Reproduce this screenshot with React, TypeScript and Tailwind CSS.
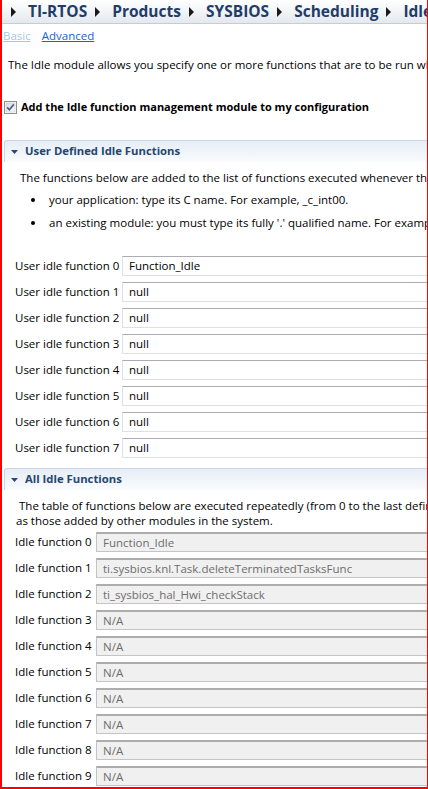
import React from "react";

const crumbs = ["TI-RTOS", "Products", "SYSBIOS", "Scheduling", "Idle"];

const userFns = [
    "Function_Idle", "null", "null", "null", "null", "null", "null", "null",
];

const allFns = [
    "Function_Idle",
    "ti.sysbios.knl.Task.deleteTerminatedTasksFunc",
    "ti_sysbios_hal_Hwi_checkStack",
    "N/A", "N/A", "N/A", "N/A", "N/A", "N/A", "N/A",
];

const font = { fontFamily: '"Open Sans", "Noto Sans", sans-serif' };

function Arrow() {
    return (
        <svg width="5" height="10" viewBox="0 0 5 10" className="flex-shrink-0">
            <polygon points="0,0 5,5 0,10" fill="#1a1a1a" />
        </svg>
    );
}

function CheckBox() {
    return (
        <svg width="13" height="13" viewBox="0 0 13 13" className="flex-shrink-0">
            <defs>
                <linearGradient id="cb" x1="0" y1="0" x2="1" y2="1">
                    <stop offset="0" stopColor="#dcdcdc" />
                    <stop offset="1" stopColor="#fafafa" />
                </linearGradient>
            </defs>
            <rect x="0.5" y="0.5" width="12" height="12" fill="#fff" stroke="#8e8f8f" />
            <rect x="2" y="2" width="9" height="9" fill="url(#cb)" stroke="#c6c6c6" strokeWidth="0.6" />
            <path d="M3.2 6.4 L5.4 8.8 L9.8 3.4" fill="none" stroke="#4a5f8f" strokeWidth="1.7" />
        </svg>
    );
}

function SectionHeader({ title }: { title: string }) {
    return (
        <div className="ml-[2px] h-[22px] flex items-center pl-[6px] border-t border-l border-[#c9d5e3] rounded-tl-[3px] bg-gradient-to-b from-[#e6edf5] to-[#fafcfe]">
            <svg width="7" height="4" viewBox="0 0 7 4" className="flex-shrink-0">
                <polygon points="0,0 7,0 3.5,4" fill="#2a4a75" />
            </svg>
            <span className="ml-[7px] text-[11.3px] font-bold text-[#25466f]">{title}</span>
        </div>
    );
}

export default function App() {
    return (
        <div
            className="w-[428px] h-[789px] overflow-hidden bg-white border-l-2 border-r border-b-2 border-[#ff0000] text-[11.5px] text-black whitespace-nowrap"
            style={font}
        >
            {/* Breadcrumb */}
            <div className="h-[24px] flex items-center pl-[9px] pt-[1px] border-b border-[#c3cdd8] bg-gradient-to-b from-white to-[#e4e9ee]">
                {crumbs.map((c) => (
                    <div key={c} className="flex items-center flex-shrink-0">
                        <Arrow />
                        <span className="ml-[12px] mr-[8px] text-[15.5px] font-bold text-[#1f3d68] leading-none">{c}</span>
                    </div>
                ))}
            </div>

            {/* Tabs */}
            <div className="h-[24px] flex items-center pl-[1px] gap-[11px]">
                <span className="text-[#a9c6ea] underline">Basic</span>
                <span className="text-[#1c5fd6] underline">Advanced</span>
            </div>

            <div className="h-[34px] flex items-center pl-[6px]">
                The Idle module allows you specify one or more functions that are to be run when no other threads are running.
            </div>

            <div className="h-[50px] flex items-center pl-[2px] gap-[4px]">
                <CheckBox />
                <span className="font-bold text-[11px]">Add the Idle function management module to my configuration</span>
            </div>

            {/* User defined */}
            <div className="mt-[8px]">
                <SectionHeader title="User Defined Idle Functions" />
                <div className="h-[26px] pt-[8px] pl-[18px] leading-[15px]">
                    The functions below are added to the list of functions executed whenever there are no other threads running.
                </div>
                {[
                    "your application: type its C name. For example, _c_int00.",
                    "an existing module: you must type its fully '.' qualified name. For example, ti.sysbios.knl.Task.deleteTerminatedTasksFunc.",
                ].map((t) => (
                    <div key={t} className="h-[23px] flex items-center pl-[29px]">
                        <span className="w-[4px] h-[4px] rounded-full bg-black flex-shrink-0" />
                        <span className="ml-[14px]">{t}</span>
                    </div>
                ))}
                <div className="mt-[19px]">
                    {userFns.map((v, i) => (
                        <div key={i} className="h-[26px] flex items-center pl-[13px]">
                            <span className="w-[107px] flex-shrink-0">User idle function {i}</span>
                            <div className="h-[20px] w-[340px] flex-shrink-0 flex items-center pl-[6px] bg-white border border-[#dde1e7] border-t-[#abadb3]">
                                {v}
                            </div>
                        </div>
                    ))}
                </div>
            </div>

            {/* All idle */}
            <div className="mt-[7px]">
                <SectionHeader title="All Idle Functions" />
                <div className="pt-[8px] pl-[14px] leading-[15px]">
                    <div className="indent-[3px]">
                        The table of functions below are executed repeatedly (from 0 to the last defined function) in the Idle task, as well
                    </div>
                    <div>as those added by other modules in the system.</div>
                </div>
                <div className="mt-[1px]">
                    {allFns.map((v, i) => (
                        <div key={i} className="h-[26px] flex items-center pl-[13px]">
                            <span className="w-[81px] flex-shrink-0">Idle function {i}</span>
                            <div className="h-[20px] w-[360px] flex-shrink-0 flex items-center pl-[6px] bg-[#f0f0f0] border border-[#c4c4c4] border-t-2 border-t-[#adadad] text-[#6d6d6d]">
                                {v}
                            </div>
                        </div>
                    ))}
                </div>
            </div>
        </div>
    );
}
